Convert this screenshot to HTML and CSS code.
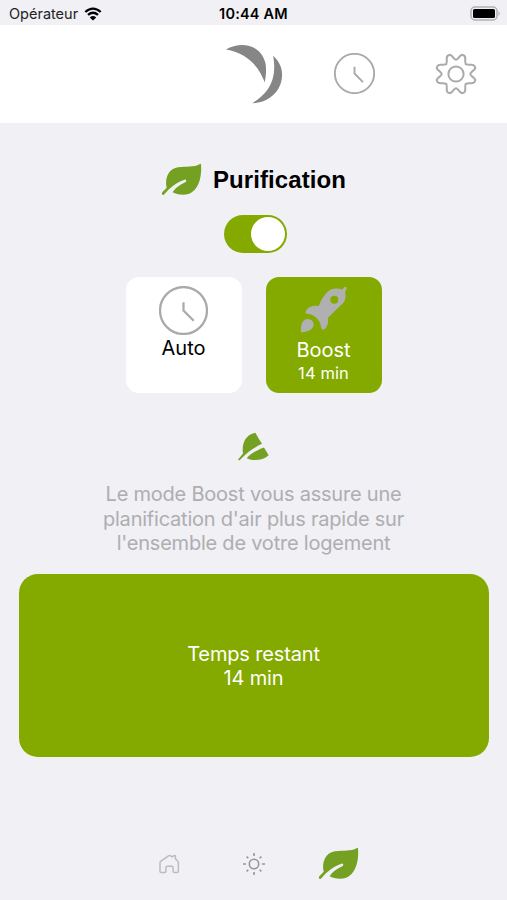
FILE: index.html
```html
<!DOCTYPE html>
<html lang="fr">

<head>
    <meta charset="UTF-8">
    <meta name="viewport" content="width=device-width, initial-scale=1.0">
    <title>Purification</title>
    <link rel="stylesheet" href="styles.css">
</head>

<body>
    <svg class="defs" width="0" height="0">
        <symbol id="leaf" viewBox="32 38 123 102">
            <path d="M149 41Q152 39 152 43C155 75 147 133 98 133C85 133 75 131 67 126C74 112 90 103 107 94C109 91 107 87 103 88C80 95 60 110 42 132C39 136 33 133 35 127C40 121 44 117 49 112C43 85 53 56 83 51C108 47 129 52 149 41Z" />
        </symbol>
        <symbol id="clock" viewBox="0 0 48 48">
            <circle cx="24" cy="24" r="23" />
            <path d="M24 16V24L34 34" />
        </symbol>
    </svg>
    <div class="status">
        <div class="carrier">Opérateur
            <svg class="wifi" viewBox="0 0 18 14">
                <path d="M1.3 5Q9 -1.8 16.7 5M4 7.8Q9 3.6 14 7.8" />
                <path class="dot" d="M9 13.6L5.8 10.4Q9 7.8 12.2 10.4Z" />
            </svg>
        </div>
        <div class="time">10:44 AM</div>
        <div class="power">
            <svg class="battery" viewBox="0 0 31 15">
                <rect class="case" x="1" y="1" width="26" height="13" rx="4" />
                <rect x="3" y="3" width="22" height="9" rx="1.5" />
                <path class="cap" d="M28.5 5Q31 7.5 28.5 10Z" />
            </svg>
        </div>
    </div>
    <div class="header">
        <svg class="logo" viewBox="45 28 175 180">
            <path d="M48 44C90 20 150 25 167 85C171 105 168 125 165 144C150 100 115 55 48 44Z" />
            <path d="M190 63C215 85 224 115 212 150C200 183 165 207 127 206C170 180 205 140 190 63Z" />
        </svg>
        <svg class="clock clock-sm"><use href="#clock" /></svg>
        <svg class="gear" viewBox="-21 -21 42 42">
            <g id="tooth">
                <path d="M0 -14.3C2.5 -14.3 3.2 -18.8 6 -19.3L8 -18.5C10.8 -17 8 -13 9.8 -9.8C13 -8 17 -10.8 18.5 -8L19.3 -6C18.8 -3.2 14.3 -2.5 14.3 0" />
            </g>
            <use href="#tooth" transform="rotate(90)" />
            <use href="#tooth" transform="rotate(180)" />
            <use href="#tooth" transform="rotate(270)" />
            <circle r="7.6" />
        </svg>
    </div>
    <div class="main">
        <div class="title">
            <svg class="leaf"><use href="#leaf" /></svg>
            <h1>Purification</h1>
        </div>
        <div class="switch">
            <div class="knob"></div>
        </div>
        <div class="modes">
            <div class="mode">
                <svg class="clock clock-lg"><use href="#clock" /></svg>
                <div class="name">Auto</div>
            </div>
            <div class="mode active">
                <svg class="rocket" viewBox="135 52 144 144">
                    <path fill-rule="evenodd" d="M222 66C234 58 250 58 262 63L266 57Q271 52 275 57Q276 61 270 69C274 84 271 100 259 108L219 147C221 162 217 178 205 183Q199 183 198 176C197 156 181 138 157 135Q149 134 152 129C157 115 172 108 191 112C197 97 207 77 222 66ZM238 81A12 12 0 1 0 238 105A12 12 0 1 0 238 81Z" />
                    <path d="M138 191C136 168 142 153 156 151C168 150 179 159 175 172C171 184 157 190 138 191Z" />
                </svg>
                <div class="name">Boost</div>
                <div class="left">14 min</div>
            </div>
        </div>
        <svg class="leaf-cut" viewBox="446 20 93 86">
            <path d="M447 101L461 84C457 60 465 28 498 22C505 35 512 46 518 55C495 66 475 80 460 95L451 104Q446 106 447 101Z" />
            <path d="M472 98C485 84 502 74 524 66L538 89C520 105 492 108 472 98Z" />
        </svg>
        <p class="text">Le mode Boost vous assure une<br>planification d'air plus rapide sur<br>l'ensemble de votre logement</p>
        <div class="timer">
            <div>Temps restant</div>
            <div>14 min</div>
        </div>
    </div>
    <div class="tabs">
        <svg class="home" viewBox="58 55 64 60">
            <path d="M65 111Q61 111 61 107V82Q61 78 64 76L87 60Q90 58 94 60L98 63L103 60H108V69L114 75Q117 78 117 82V107Q117 111 113 111H105Q101 111 101 107V97Q101 92 96 92H84Q79 92 79 97V107Q79 111 75 111Z" />
        </svg>
        <svg class="sun" viewBox="-12 -12 24 24">
            <circle r="4.7" />
            <path d="M0 -11V-8M0 11V8M-11 0H-8M11 0H8M-7.4 -7.4L-5.7 -5.7M7.4 -7.4L5.7 -5.7M-7.4 7.4L-5.7 5.7M7.4 7.4L5.7 5.7" />
        </svg>
        <svg class="leaf"><use href="#leaf" /></svg>
    </div>
</body>

</html>
```
FILE: styles.css
```css
* {
    margin: 0;
    padding: 0;
    box-sizing: border-box;
}

body {
    width: 507px;
    height: 900px;
    overflow: hidden;
    display: flex;
    flex-direction: column;
    background: #f0f0f5;
    color: #000;
    font-family: Inter, "Liberation Sans", sans-serif;
}

svg {
    display: block;
    flex: none;
}

.defs {
    position: absolute;
}

.status {
    display: grid;
    grid-template-columns: 1fr 1fr 1fr;
    align-items: center;
    height: 25px;
    padding: 2px 6px 0 9px;
    font-size: 14.5px;
}

.carrier {
    display: flex;
    align-items: center;
    gap: 6px;
    color: #222;
}

.wifi {
    width: 18px;
    height: 14px;
    fill: none;
    stroke: #000;
    stroke-width: 2.3;
}

.wifi .dot {
    fill: #000;
    stroke: none;
}

.time {
    padding-right: 3px;
    text-align: center;
    font-weight: 600;
    letter-spacing: .2px;
}

.power {
    display: flex;
    justify-content: flex-end;
}

.battery {
    width: 31px;
    height: 15px;
}

.battery .case {
    fill: none;
    stroke: #b0b0b2;
    stroke-width: 1.5;
}

.battery .cap {
    fill: #b0b0b2;
}

.header {
    display: flex;
    align-items: center;
    height: 98px;
    padding-left: 225px;
    background: #fff;
}

.logo {
    width: 58px;
    height: 60px;
    fill: #868686;
}

.clock {
    fill: none;
    stroke: #aaa;
    stroke-width: 2.2;
}

.clock-sm {
    width: 41px;
    height: 41px;
    margin: 0 0 2px 51px;
}

.clock-lg {
    width: 49px;
    height: 49px;
    margin-bottom: 1px;
}

.gear {
    width: 42px;
    height: 42px;
    margin-left: 60px;
    fill: none;
    stroke: #aaa;
    stroke-width: 2;
}

.main {
    display: flex;
    flex-direction: column;
    align-items: center;
    flex: 1;
    padding-top: 39px;
}

.title {
    display: flex;
    align-items: center;
    gap: 11px;
    height: 35px;
}

.title h1 {
    font: bold 24px "Liberation Sans", sans-serif;
    letter-spacing: .1px;
}

.leaf {
    width: 41px;
    height: 34px;
    fill: #74a122;
}

.switch {
    display: flex;
    justify-content: flex-end;
    width: 63px;
    height: 38px;
    margin: 18px 0 24px 3px;
    padding: 2px;
    border-radius: 19px;
    background: #84aa00;
}

.knob {
    width: 34px;
    height: 34px;
    border-radius: 50%;
    background: #fff;
}

.modes {
    display: flex;
    gap: 24px;
}

.mode {
    display: flex;
    flex-direction: column;
    align-items: center;
    width: 116px;
    height: 116px;
    padding-top: 9px;
    border-radius: 13px;
    background: #fff;
    font-size: 20px;
    line-height: 25px;
}

.mode.active {
    background: #84aa00;
    color: #fff;
}

.rocket {
    width: 48px;
    height: 48px;
    margin-bottom: 4px;
    fill: #b0b0b0;
}

.left {
    font-size: 16.5px;
    line-height: 21px;
    letter-spacing: .1px;
}

.leaf-cut {
    width: 31px;
    height: 29px;
    margin-top: 39px;
    fill: #74a122;
}

.text {
    margin-top: 21px;
    color: #aeaeb0;
    font-size: 20px;
    line-height: 24.5px;
    letter-spacing: -.22px;
    text-align: center;
}

.timer {
    display: flex;
    flex-direction: column;
    justify-content: center;
    width: 470px;
    height: 183px;
    margin-top: 18px;
    padding-top: 2px;
    border-radius: 19px;
    background: #84aa00;
    color: #fff;
    font-size: 20px;
    line-height: 24.5px;
    letter-spacing: -.15px;
    text-align: center;
}

.tabs {
    display: flex;
    align-items: center;
    height: 72px;
    padding-left: 159px;
}

.home {
    width: 21px;
    height: 20px;
    fill: none;
    stroke: #bbbbc0;
    stroke-width: 4.5;
}

.sun {
    width: 24px;
    height: 24px;
    margin-left: 62px;
    fill: none;
    stroke: #96969c;
    stroke-width: 1.6;
}

.tabs .leaf {
    margin-left: 52px;
}
```
